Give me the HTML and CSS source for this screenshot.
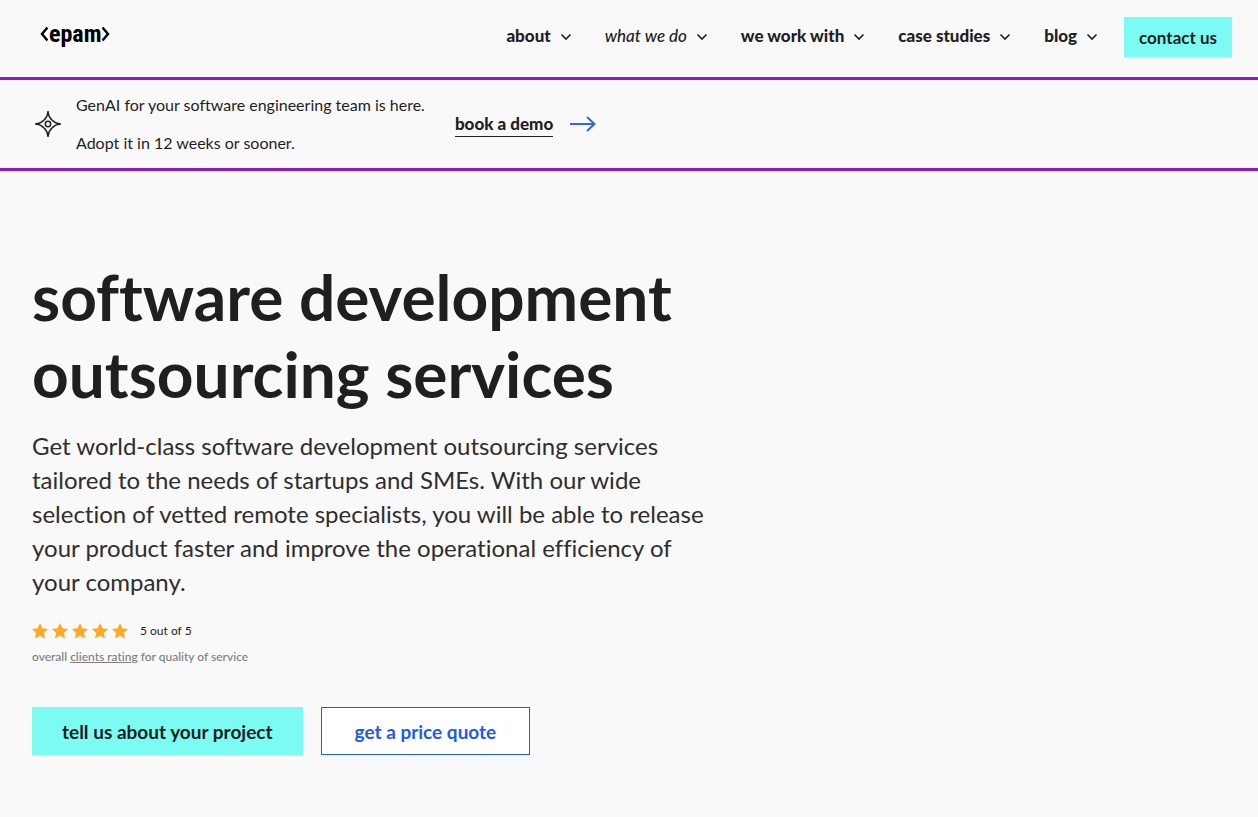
FILE: index.html
```html
<!DOCTYPE html>
<html lang="en">
<head>
    <meta charset="UTF-8">
    <meta name="viewport" content="width=device-width, initial-scale=1.0">
    <title>Software Development Outsourcing Services</title>
    <link rel="stylesheet" href="styles.css">
</head>
<body>
    <header class="header">
        <a href="#" class="logo" aria-label="epam">
            <svg class="bracket" viewBox="0 0 8 16"><path d="M7.500 1.500 L2 8 L7.500 14.500"/></svg>
            <span class="logo-text">epam</span>
            <svg class="bracket" viewBox="0 0 8 16"><path d="M0.500 1.500 L6 8 L0.500 14.500"/></svg>
        </a>
        <nav class="nav">
            <button type="button" class="nav-item">about
                <svg class="chevron" viewBox="0 0 12 8"><path d="M1.500 1.500 L6 6 L10.500 1.500"/></svg>
            </button>
            <button type="button" class="nav-item active">what we do
                <svg class="chevron" viewBox="0 0 12 8"><path d="M1.500 1.500 L6 6 L10.500 1.500"/></svg>
            </button>
            <button type="button" class="nav-item">we work with
                <svg class="chevron" viewBox="0 0 12 8"><path d="M1.500 1.500 L6 6 L10.500 1.500"/></svg>
            </button>
            <button type="button" class="nav-item">case studies
                <svg class="chevron" viewBox="0 0 12 8"><path d="M1.500 1.500 L6 6 L10.500 1.500"/></svg>
            </button>
            <button type="button" class="nav-item">blog
                <svg class="chevron" viewBox="0 0 12 8"><path d="M1.500 1.500 L6 6 L10.500 1.500"/></svg>
            </button>
        </nav>
        <a href="#" class="btn btn-contact">contact us</a>
    </header>

    <section class="banner">
        <svg class="spark" viewBox="0 0 26 26">
            <path d="M13 1 C13.500 7 19 12.500 25 13 C19 13.500 13.500 19 13 25 C12.500 19 7 13.500 1 13 C7 12.500 12.500 7 13 1 Z"/>
            <path d="M13 0 V4 M13 22 V26 M0 13 H4 M22 13 H26"/>
            <circle cx="13" cy="13" r="2.700"/>
        </svg>
        <div class="banner-text">
            <p>GenAI for your software engineering team is here.</p>
            <p>Adopt it in 12 weeks or sooner.</p>
        </div>
        <a href="#" class="demo">
            <span class="demo-label">book a demo</span>
            <svg class="arrow" viewBox="0 0 26 16"><path d="M0 8 H24.500 M17 1 L24.500 8 L17 15"/></svg>
        </a>
    </section>

    <main class="hero">
        <h1>software development outsourcing services</h1>
        <p class="lead">Get world-class software development outsourcing services tailored to the needs of startups and SMEs. With our wide selection of vetted remote specialists, you will be able to release your product faster and improve the operational efficiency of your company.</p>
        <div class="rating">
            <div class="stars">
                <svg viewBox="0 0 16 16"><path d="M8 0 L10.400 5.300 L16 6 L11.900 9.900 L13 15.500 L8 12.800 L3 15.500 L4.100 9.900 L0 6 L5.600 5.300 Z"/></svg>
                <svg viewBox="0 0 16 16"><path d="M8 0 L10.400 5.300 L16 6 L11.900 9.900 L13 15.500 L8 12.800 L3 15.500 L4.100 9.900 L0 6 L5.600 5.300 Z"/></svg>
                <svg viewBox="0 0 16 16"><path d="M8 0 L10.400 5.300 L16 6 L11.900 9.900 L13 15.500 L8 12.800 L3 15.500 L4.100 9.900 L0 6 L5.600 5.300 Z"/></svg>
                <svg viewBox="0 0 16 16"><path d="M8 0 L10.400 5.300 L16 6 L11.900 9.900 L13 15.500 L8 12.800 L3 15.500 L4.100 9.900 L0 6 L5.600 5.300 Z"/></svg>
                <svg viewBox="0 0 16 16"><path d="M8 0 L10.400 5.300 L16 6 L11.900 9.900 L13 15.500 L8 12.800 L3 15.500 L4.100 9.900 L0 6 L5.600 5.300 Z"/></svg>
            </div>
            <span>5 out of 5</span>
        </div>
        <p class="rating-note">overall <a href="#">clients rating</a> for quality of service</p>
        <div class="actions">
            <a href="#" class="btn btn-primary">tell us about your project</a>
            <a href="#" class="btn btn-outline">get a price quote</a>
        </div>
    </main>
</body>
</html>
```
FILE: styles.css
```css
* {
    box-sizing: border-box;
}
body {
    margin: 0;
    font-family: Lato, sans-serif;
    font-size: 16px;
    font-variant-ligatures: none;
    color: #1f1f1f;
    background-color: #f9f9f9;
}
h1, p {
    margin: 0;
}
a {
    color: inherit;
    text-decoration: none;
}
svg {
    fill: none;
    stroke: currentColor;
    flex-shrink: 0;
}
.header {
    display: flex;
    align-items: flex-start;
    height: 80px;
    padding: 17px 26px 0 40px;
    border-bottom: 3px solid #8f1bbf;
}
.logo {
    display: flex;
    align-items: center;
    height: 34px;
    gap: 1px;
    color: #000;
}
.logo-text {
    font-family: "Roboto Condensed", Roboto, sans-serif;
    font-size: 24px;
    font-weight: bold;
    line-height: 32px;
}
.bracket {
    width: 8px;
    height: 16px;
    stroke-width: 2.5;
}
.nav {
    display: flex;
    gap: 33px;
    margin-left: auto;
    margin-right: 26px;
}
.nav-item {
    display: flex;
    align-items: center;
    gap: 9px;
    height: 36px;
    padding: 0;
    border: none;
    background: none;
    font-family: inherit;
    font-size: 17px;
    font-weight: 900;
    color: inherit;
    cursor: pointer;
}
.nav-item.active {
    font-style: italic;
    font-weight: 500;
}
.chevron {
    width: 12px;
    height: 8px;
    margin-top: 4px;
    stroke-width: 1.6;
}
.btn {
    display: flex;
    align-items: center;
    justify-content: center;
    height: 48px;
    padding: 0 30px;
    font-size: 19px;
    font-weight: bold;
    background-color: #7bfbf1;
}
.btn-contact {
    height: 40px;
    padding: 0 15px;
    font-size: 17px;
}
.banner {
    display: flex;
    align-items: center;
    height: 91px;
    padding: 0 35px;
    border-bottom: 3px solid #8f1bbf;
}
.spark {
    width: 26px;
    height: 26px;
    stroke-width: 1.5;
}
.banner-text {
    margin: 0 30px 0 15px;
    line-height: 38px;
}
.demo {
    display: flex;
    align-items: center;
    gap: 17px;
    font-size: 17px;
    font-weight: 900;
}
.demo-label {
    line-height: 24px;
    border-bottom: 1px solid #1f1f1f;
}
.arrow {
    width: 26px;
    height: 16px;
    color: #3366e8;
    stroke-width: 2;
}
.hero {
    max-width: 752px;
    padding: 87px 32px 62px;
}
h1 {
    font-size: 64px;
    font-weight: bold;
    line-height: 77px;
}
.lead {
    margin-top: 17px;
    font-size: 24px;
    line-height: 34px;
    color: #2e2e2e;
}
.rating {
    display: flex;
    align-items: center;
    gap: 12px;
    margin-top: 24px;
    font-size: 12px;
    line-height: 16px;
}
.stars {
    display: flex;
    gap: 4px;
}
.stars svg {
    width: 16px;
    height: 16px;
    fill: #ffa929;
    stroke: none;
}
.rating-note {
    margin-top: 10px;
    font-size: 12px;
    font-weight: 500;
    line-height: 16px;
    color: #7d7d7d;
}
.rating-note a {
    text-decoration: underline;
}
.actions {
    display: flex;
    flex-wrap: wrap;
    gap: 18px;
    margin-top: 42px;
}
.btn-outline {
    padding: 0 33px;
    color: #2459e6;
    background-color: #fff;
    border: 1px solid #2459e6;
}
```
